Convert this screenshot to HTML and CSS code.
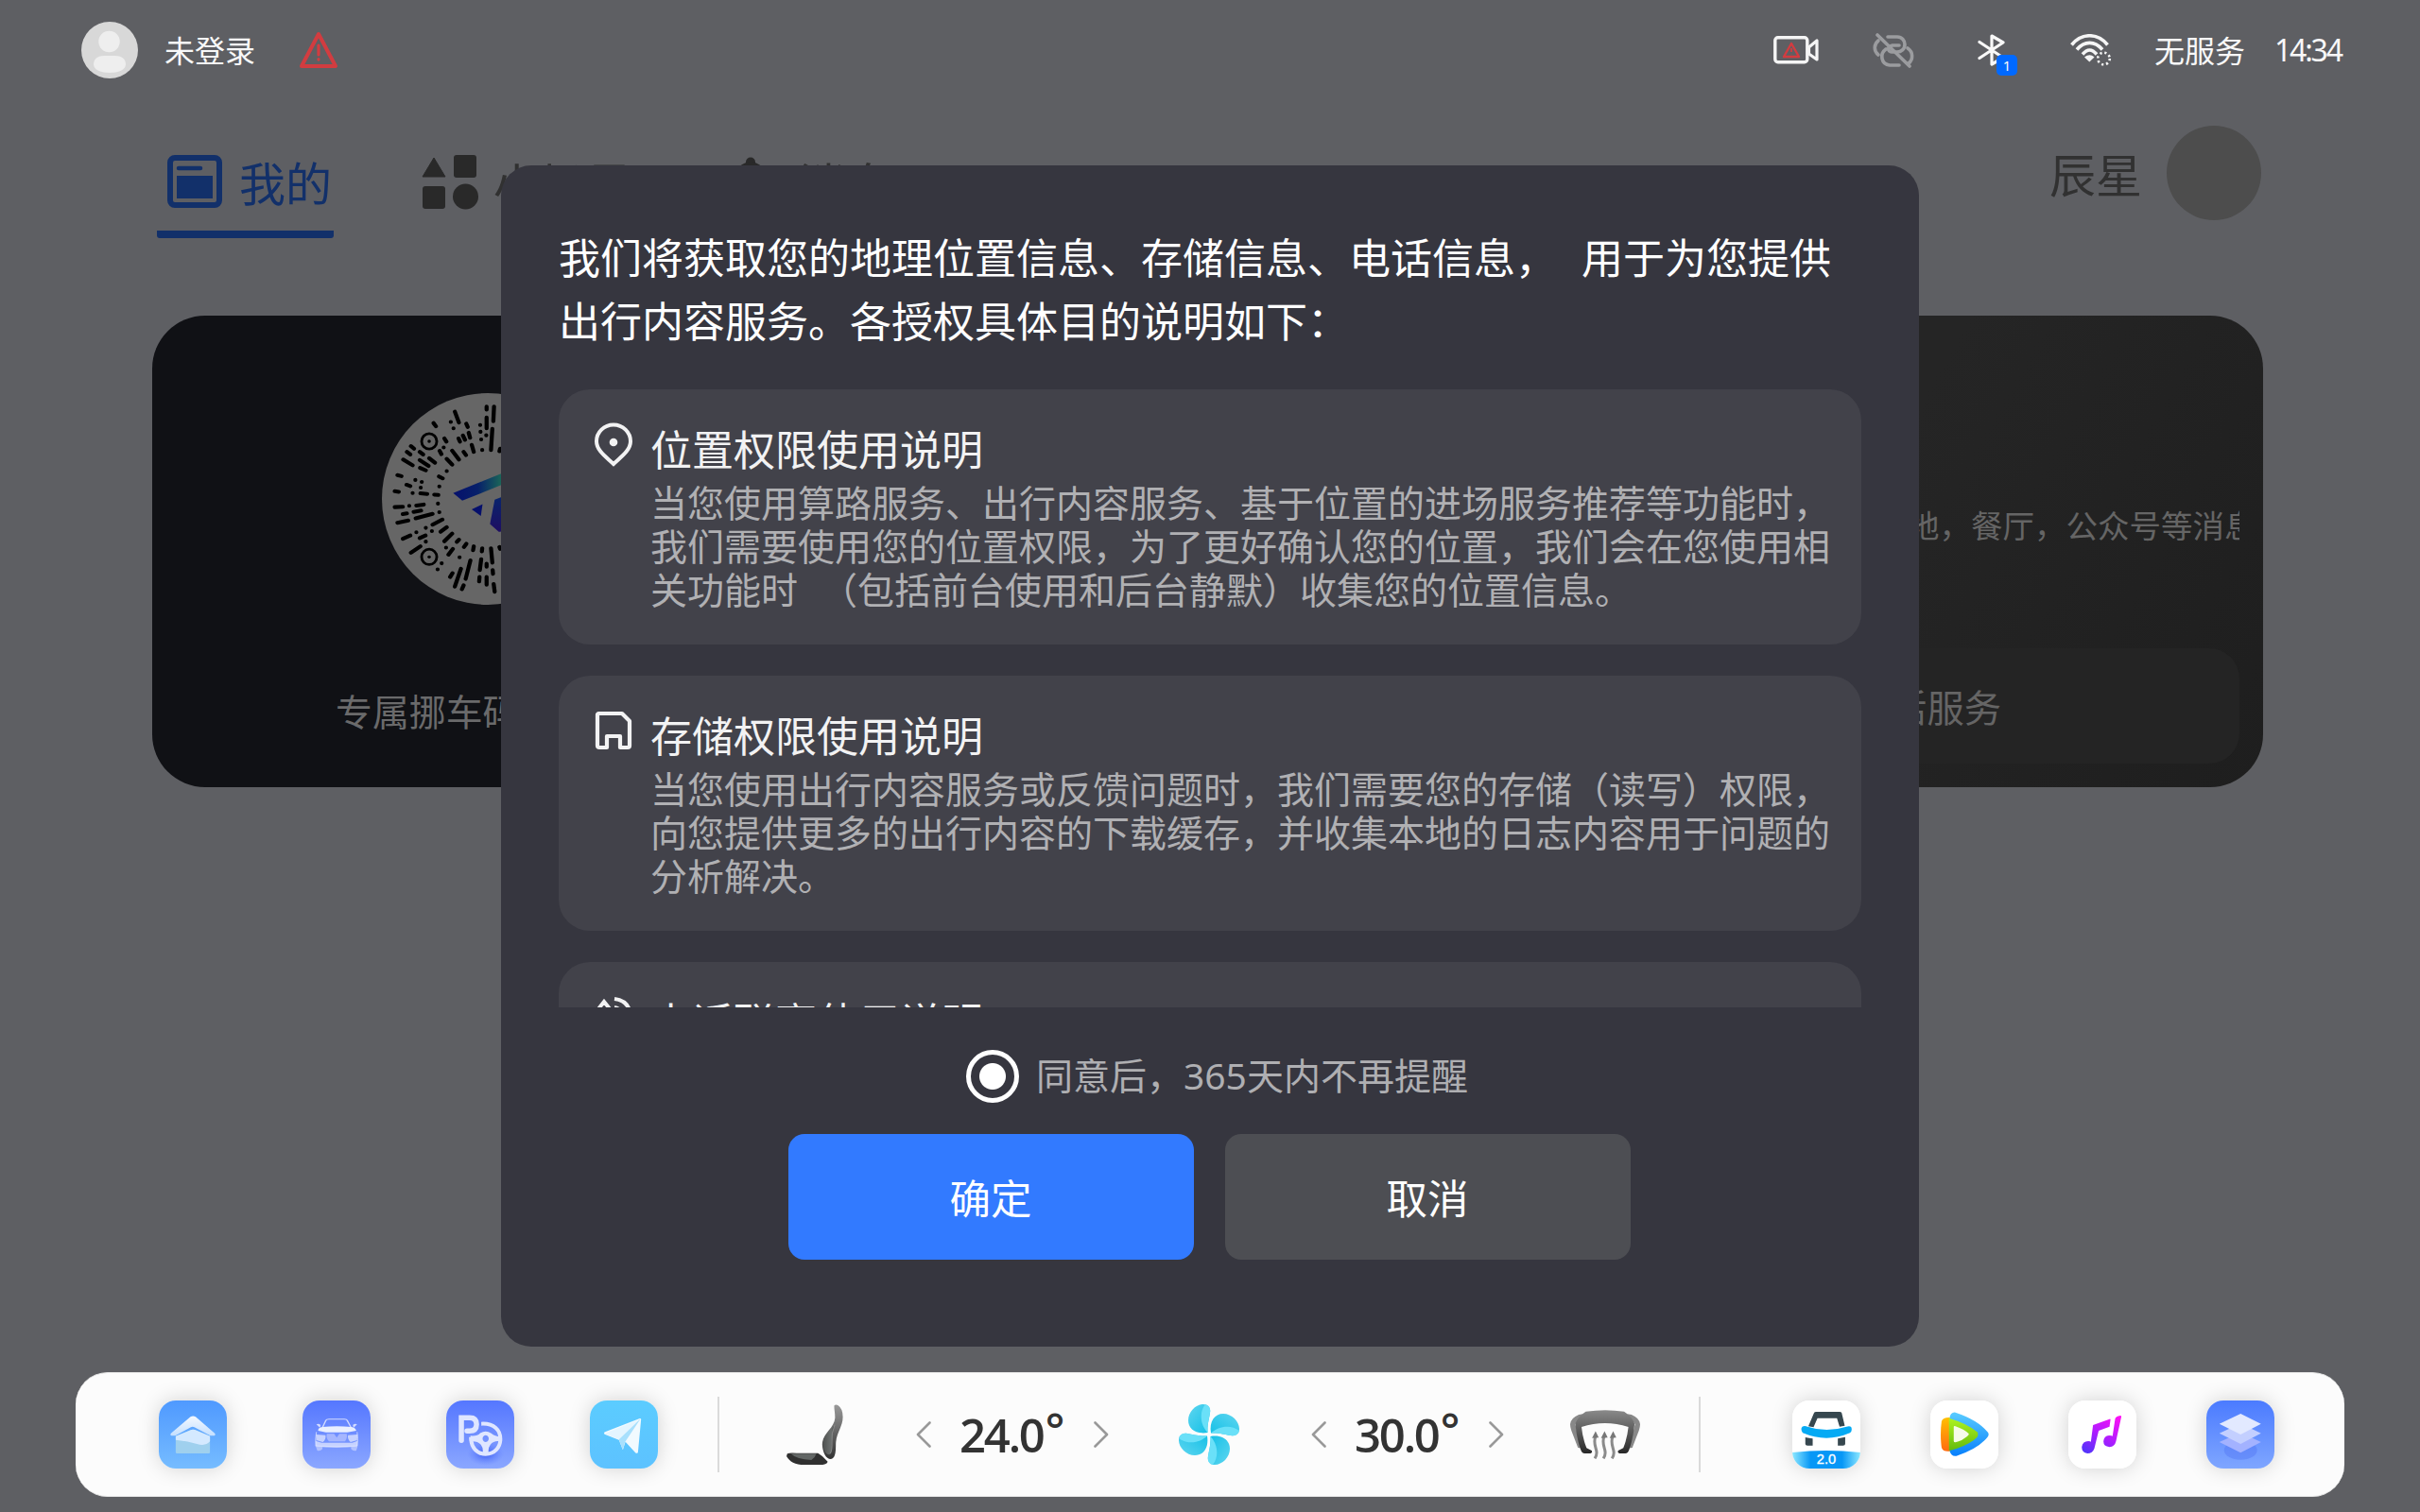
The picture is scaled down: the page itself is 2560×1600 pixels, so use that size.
FILE: index.html
```html
<!DOCTYPE html>
<html lang="zh-CN">
<head>
<meta charset="utf-8">
<title>出行服务授权</title>
<link rel="stylesheet" href="styles.css">
</head>
<body>
<div class="screen">
  <header class="status">
    <svg class="avatar" viewBox="0 0 60 60"><circle cx="30" cy="30" r="30" fill="#d8d8d8"/><circle cx="29.500" cy="21" r="11.200" fill="#eee"/><path d="M13 45c0-6 5-9 11-9h12c6 0 11 3 11 9s-8 9-17 9-17-3-17-9z" fill="#eee"/></svg>
    <span class="login">未登录</span>
    <svg class="warn" viewBox="0 0 42 40"><path d="M21 3 39 37H3z" fill="none" stroke="#d23c40" stroke-width="4" stroke-linejoin="round"/><path d="M21 15v10M21 29.500v.6" stroke="#d23c40" stroke-width="3.200" stroke-linecap="round"/></svg>
    <div class="tray">
      <svg class="ic-cam" viewBox="0 0 48 30"><rect x="1.800" y="1.800" width="34" height="26" rx="3" fill="none" stroke="#f5f5f5" stroke-width="3.400"/><path d="M37.500 12 46 5v20l-8.500-6z" fill="none" stroke="#f5f5f5" stroke-width="3.200" stroke-linejoin="round"/><path d="M19 8l8 14H11z" fill="none" stroke="#d23c40" stroke-width="2.400" stroke-linejoin="round"/><path d="M19 13v4M19 19.200v.4" stroke="#d23c40" stroke-width="1.800"/></svg>
      <svg class="ic-link" viewBox="0 0 44 38" fill="none" stroke="#9b9c9f" stroke-width="3.600" stroke-linecap="round"><path d="M16 5h10c5 0 8 4 8 8 0 5-4 8-8 8h-5M6 9C1 13 1 20 6 24M37 17c6 4 6 12 1 16M28 35H18c-9-1-11-12-4-17M28 14h-7c-6 1-5 7-1 7"/><path d="M5 3 39 36"/></svg>
      <span class="bt"><svg class="ic-bt" viewBox="0 0 30 34"><path d="M2 8.500 27 25 15 32V2l12 7L2 25.500" fill="none" stroke="#f8f8f8" stroke-width="3.200" stroke-linejoin="round" stroke-linecap="round"/></svg><span class="badge">1</span></span>
      <svg class="ic-wifi" viewBox="0 0 44 34" fill="none" stroke="#f5f5f5" stroke-width="3.600"><path d="M1.500 11.500C12-1.500 29-1.500 39.500 11.500M7 16.500c8-9.500 19-9.500 27 0M13 21.500c5-6 10-6 15 0"/><path d="M15 24.500c4-3 7-3 10.500 0l-5.200 5z" fill="#f5f5f5" stroke="none"/><circle cx="35.500" cy="26" r="6.300" stroke-width="2.600" stroke-dasharray="2.200 2.750"/></svg>
      <span class="net">无服务</span>
      <span class="clock">14:34</span>
    </div>
  </header>

  <nav class="tabs">
    <div class="tab active">
      <svg class="ic-mine" viewBox="0 0 58 56"><rect x="3" y="3" width="52" height="50" rx="5" fill="none" stroke="#12306a" stroke-width="6"/><path d="M12 14h23" stroke="#12306a" stroke-width="4.500" stroke-linecap="round"/><path d="M10 22h38v24H10z" fill="#12306a"/></svg>
      <span>我的</span>
    </div>
    <div class="tab second">
      <svg class="ic-grid" viewBox="0 0 60 58" fill="#292929"><path d="M13 3 25 23H1z" stroke="#292929" stroke-linejoin="round"/><rect x="34" y="0" width="24" height="24" rx="3"/><rect x="1" y="33" width="24" height="24" rx="3"/><circle cx="46.500" cy="44" r="13.500"/></svg>
      <span>小场景</span>
    </div>
    <div class="tab third">
      <svg class="ic-bell" viewBox="0 0 48 54" fill="#292929"><circle cx="24" cy="5.500" r="5"/><path d="M24 5c14 2 18 12 18 22v13l5 5H1l5-5V27C6 17 10 7 24 5z"/></svg>
      <span>消息</span>
    </div>
    <div class="user"><span>辰星</span><i class="face"></i></div>
  </nav>

  <main class="cards">
    <section class="card dark">
      <svg class="qr" viewBox="738 284 627 663" preserveAspectRatio="none">
        <defs><linearGradient id="lg" x1="950" y1="0" x2="1110" y2="0" gradientUnits="userSpaceOnUse"><stop offset="0" stop-color="#06106c"/><stop offset=".45" stop-color="#07206a"/><stop offset=".9" stop-color="#1b6858"/></linearGradient><linearGradient id="lg2" x1="0" y1="0" x2="0" y2="1"><stop offset="0" stop-color="#07266e"/><stop offset="1" stop-color="#1e0e62"/></linearGradient></defs>
        <ellipse cx="1051.500" cy="615.500" rx="313.500" ry="331.500" fill="#666"/>
        <path class="ticks" d="M1048 326v10M1070 326l-2 46M1048 360v34M1065 396l-4 66M954 342l12 34M942 374v.1M950 394v.1M988 380l4 10M1029 384v.1M1030 405v.1M1047 416v.1M1032 429v.1M1035 462v.1M891 378l7 10M923 426l6 10M965 426l4 10M978 417l6 13M995 408l4 16M1004 446l6 22M980 468l7 10M946 464l20 28M909 465l5 10M921 454v.1M824 450l9 8M812 468l10 8M850 468l10 8M801 492l28 18M850 494l26 18M878 488l17 14M851 518l17 8M930 490l16 18M930 528v.1M784 541l12 3M811 571l11 4M837 556v.1M856 562v.1M853 580v.1M829 597v.1M907 545l11 6M908 576v.1M776 591l12 2M852 598l20 2M893 602l12 1M776 641l24-1M819 637v.1M840 636l22-3M904 630v.1M800 663l12-2M832 656l22-4M838 676l50-14M908 657v.1M784 690l32-7M888 696l29-16M800 740l22-10M840 720v.1M868 706v.1M886 716v.1M850 738l17-8M868 749v.1M912 718l18-14M824 784l28-20M923 748l23-24M960 750l6-7M928 768v.1M935 790l13-18M981 766l7-10M1008 776l2-12M1034 780l1-10M1061 770l4 45M1086 766l2 6M968 798v.1M915 817v.1M903 836v.1M986 866l14-58M954 890l18-56M940 860l7-12M975 898l5-12M1028 838l4-34M1048 818v10M1027 860l-1 14M1048 860v24M1066 838l1 12M1069 882l3 24M1086 466l2-8"/>
        <g fill="none" stroke="#000" stroke-width="8"><ellipse cx="878" cy="435" rx="22.500" ry="24"/><ellipse cx="878" cy="797" rx="22.500" ry="24"/></g><circle cx="878" cy="435" r="5"/><circle cx="878" cy="797" r="5"/>
        <path d="M949 597 1110 528V564L976 621z" fill="url(#lg)"/><path d="M1004 648 1036 632 1031 669z" fill="#06106c"/><path d="M1072 618 1110 602 1090 718H1084L1058 694z" fill="url(#lg2)"/>
      </svg>
      <p class="qr-label">专属挪车码</p>
    </section>
    <section class="card life">
      <p class="life-text">地，餐厅，公众号等消息</p>
      <div class="life-btn">活服务</div>
    </section>
  </main>

  <footer class="dock">
    <div class="apps left">
      <svg class="app s1" viewBox="235 156 157 216" preserveAspectRatio="none"><defs><linearGradient id="h1" x1="0" y1="0" x2="0" y2="1"><stop offset="0" stop-color="#4f99ff"/><stop offset="1" stop-color="#76bcff"/></linearGradient><linearGradient id="w1" x1="0" y1="0" x2="0" y2="1"><stop offset="0" stop-color="#f4f9ff"/><stop offset="1" stop-color="#c4dfff"/></linearGradient></defs><path fill="url(#h1)" d="M235 156h157v216H235z"/><path d="M308 208q6-5 12 0l44 52q4 7-4 8h-6l-37-27q-4-3-8 0l-36 27h-8q-5-2-2-8z" fill="url(#w1)"/><path d="M274 269l36-20q4-2 8 0l35 20v52q0 3-3 3H277q-3 0-3-3z" fill="#9fd0ee"/><path d="M274 269l36-20q4-2 8 0l35 20v17q-10 16-30 8-26-10-49-13z" fill="#d4e9ff"/></svg>
      <svg class="app s2" viewBox="566 156 157 216" preserveAspectRatio="none"><defs><linearGradient id="h2" x1="0" y1="0" x2="0" y2="1"><stop offset="0" stop-color="#5577ff"/><stop offset="1" stop-color="#8ba7ff"/></linearGradient></defs><path fill="url(#h2)" d="M566 156h157v216H566z"/><path d="M612 242 620 219q1-4 7-4h36q5 0 6 4l9 23" fill="none" stroke="#d3dcff" stroke-width="3"/><path d="M598 232q5-4 10 2l-2 8zM692 232q-5-4-10 2l2 8z" fill="#d3dcff"/><path d="M602 252q0-10 10-12 33-5 67 0 9 2 11 12l-21 5H620z" fill="#eaf0ff"/><path d="M597 264l22 2q2 12-6 22l-15-6zM693 264l-22 2q-2 12 6 22l15-6z" fill="#c6d2ff"/><path d="M622 262h17l6 12 6-12h17q2 14-4 24H627q-7-10-5-24z" fill="#a5b6ff"/><path d="M596 284l14 6h71l12-6v18q-48 6-97 0z" fill="#c6d2ff"/><path d="M597 303h15v7q-5 8-12 5zM693 303h-15v7q5 8 12 5z" fill="#b1c1ff"/><path d="M598 256q-3 24-1 44 48 5 95 0 3-24 0-44" fill="none" stroke="#dbe3ff" stroke-width="2"/></svg>
      <svg class="app s3" viewBox="897 156 157 216" preserveAspectRatio="none"><defs><radialGradient id="sh3"><stop offset="0" stop-color="#3c5cf0"/><stop offset="1" stop-color="#5f7fff" stop-opacity="0"/></radialGradient></defs><path fill="url(#h2)" d="M897 156h157v216H897z"/><ellipse cx="988" cy="325" rx="42" ry="38" fill="url(#sh3)"/><g fill="none" stroke="#dfe6ff"><path class="px6" stroke-linecap="round" d="M932 283V211H951Q967 211 967 232 967 253 951 253H945"/><path class="px4" d="M978 230C1008 228 1022 250 1022 278 1022 306 1008 326 988 326 968 326 954 306 954 272"/></g><path d="M953 268q16 2 22-8 13-12 26 0 8 10 22 10v16q-16-4-24 10-6 10-4 28h-14q2-18-4-28-8-12-24-10zM988 266a7 11 0 1 0 .1 0z" fill="#dfe6ff" fill-rule="evenodd"/></svg>
      <svg class="app s4" viewBox="1228 156 157 216" preserveAspectRatio="none"><defs><linearGradient id="h4" x1="0" y1="0" x2="0" y2="1"><stop offset="0" stop-color="#5bccff"/><stop offset="1" stop-color="#5dc2ff"/></linearGradient></defs><path fill="url(#h4)" d="M1228 156h157v216h-157z"/><path d="M1263 256 1343 213q4-1 3 5l-7 102q-2 6-6 2l-23-35-6 26-9-32-33-18q-3-4 1-7z" fill="#f1faff"/><path d="M1345 215 1295 280l-33-19z" fill="#e4f5ff"/><path d="M1345 214 1309 288l-5 25-9-33z" fill="#a8e0fd"/></svg>
    </div>
    <i class="divider d1"></i>
    <svg class="seat" viewBox="225 167 146 190" preserveAspectRatio="none"><defs><linearGradient id="st" x1="0" y1="0" x2="0" y2="1"><stop offset="0" stop-color="#999"/><stop offset="1" stop-color="#333"/></linearGradient><linearGradient id="st2" x1="0" y1="0" x2="1" y2="0"><stop offset="0" stop-color="#505352"/><stop offset=".7" stop-color="#6c706f"/><stop offset="1" stop-color="#444"/></linearGradient></defs><path d="M348 171q4-5 10 0 12 10 12 36c0 30-17 50-18 84 0 30-2 46-13 48-12 0-21-20-22-46 0-35 31-50 33-84 0-18-3-28-2-38z" fill="url(#st)"/><path d="M349 232q-8 24-8 50c0 22 2 38-6 43-12-2-17-20-15-42 2-20 18-34 29-51z" fill="url(#st2)"/><path d="M349 232q-9 26-7 54 1 24-4 36" fill="none" stroke="#aaa" stroke-width="1.500"/><path d="M227 322q8-3 24-1h55q12 8 25 26-1 10-22 10h-38c-24 0-38-10-46-27z" fill="#303030"/><path d="M236 322h66q-3 12-13 20-38-2-53-20z" fill="#626665"/></svg>
    <svg class="chev c1" viewBox="0 0 16 28"><path d="M14.500 1.500 2 14l12.500 12.500"/></svg>
    <span class="temp">24.0<sup>°</sup></span>
    <svg class="chev c2" viewBox="0 0 16 28"><path d="M1.500 1.500 14 14 1.500 26.500"/></svg>
    <svg class="fan" viewBox="0 0 64 64"><defs><linearGradient id="fn" x1="0" y1="0" x2="1" y2="1"><stop offset="0" stop-color="#5fd6f0"/><stop offset="1" stop-color="#12bfe6"/></linearGradient><g id="blade"><path d="M30.500 30C18 32 10 26 10 17 10 8 18 0 26 0c5 0 8 4 7 9-1 7-3 12-2.500 21z" fill="url(#fn)"/><path d="M30.500 30C23 22 21 9 28 0c4 1 6 4 5 9-1 7-3 12-2.500 21z" fill="#6ae0f8"/></g></defs><use href="#blade"/><use href="#blade" transform="rotate(90 32 32)"/><use href="#blade" transform="rotate(180 32 32)"/><use href="#blade" transform="rotate(270 32 32)"/></svg>
    <svg class="chev c3" viewBox="0 0 16 28"><path d="M14.500 1.500 2 14l12.500 12.500"/></svg>
    <span class="temp">30.0<sup>°</sup></span>
    <svg class="chev c4" viewBox="0 0 16 28"><path d="M1.500 1.500 14 14 1.500 26.500"/></svg>
    <svg class="defrost" viewBox="738 185 179 155" preserveAspectRatio="none"><defs><linearGradient id="df" x1="0" y1="0" x2="0" y2="1"><stop offset="0" stop-color="#8a8a8a"/><stop offset="1" stop-color="#282828"/></linearGradient></defs><path d="M760 200q-20 10-22 30 0 9 3 20l17 54 8 2-15-76 20-32zM895 200q20 10 22 30 0 9-3 20l-17 54-8 2 15-76-20-32z" fill="#888"/><path d="M778 190q50-9 98 0 20 16 27 38-4 50-14 82-3 12-10 12h-15q-6-2-3-9l13-8q10-30 13-66-60-24-120 0 3 36 13 66l13 8q3 7-3 9h-15q-7 0-10-12-10-32-14-82 7-22 27-38z" fill="url(#df)"/><g class="heat"><path d="M801 338c14-26-8-38 2-70M823 338c14-26-8-38 2-70M845 338c14-26-8-38 2-70"/></g><path d="M794 274l9-22 8 20zM817 274l9-22 8 20zM839 274l9-22 8 20z" fill="#777"/></svg>
    <i class="divider d2"></i>
    <div class="apps right">
      <svg class="app w" viewBox="122 156 157 216" preserveAspectRatio="none"><defs><linearGradient id="c1"><stop offset="0" stop-color="#8de8ff"/><stop offset=".27" stop-color="#0797f6"/><stop offset=".73" stop-color="#0797f6"/><stop offset="1" stop-color="#8de8ff"/></linearGradient></defs><path fill="#fff" d="M122 156h157v216H122z"/><path d="M159 238 172 196q1-4 5-4h54q4 0 5 4l7 40-12 3-6-27h-45l-9 29zM152 273q9 2 17 4v22h-12q-5 0-5-5zM244 272l-17 5v22h12q5 0 5-5z" fill="#36474f"/><path d="M145 239q5-4 12 0 44 20 90 0 8-4 11 2 3 12-3 18-54 32-109 0-6-12-1-20z" fill="#05aaf4"/><path d="M122 321q78-12 157 0v51H122z" fill="url(#c1)"/><g transform="translate(200.500 357) scale(.726 1)"><text class="ver" text-anchor="middle">2.0</text></g></svg>
      <svg class="app w" viewBox="440 156 157 216" preserveAspectRatio="none"><defs><linearGradient id="v1" x1="0" y1="0" x2="0" y2="1"><stop offset="0" stop-color="#5accff"/><stop offset="1" stop-color="#077ffc"/></linearGradient><linearGradient id="v2" x1="0" y1="0" x2="0" y2="1"><stop offset="0" stop-color="#ffc000"/><stop offset="1" stop-color="#ff6a10"/></linearGradient><linearGradient id="v3" x1="0" y1="0" x2="0" y2="1"><stop offset="0" stop-color="#aef322"/><stop offset="1" stop-color="#64ba0d"/></linearGradient></defs><path fill="#fff" d="M440 156h157v216H440z"/><path d="M484 214q2-22 14-20 52 24 74 62 5 8 0 16-22 38-72 60-12 3-16-18z" fill="url(#v1)"/><path d="M485 210q-16-1-19 12-4 42 0 84 4 14 19 11z" fill="url(#v2)"/><path d="M483 212q44 18 65 44 4 8 0 16-20 28-65 44z" fill="url(#v3)"/><path d="M494 240q0-4 4-2 20 9 31 24 0 4-4 8-12 14-27 19-4 0-4-4z" fill="#f6fbe9"/></svg>
      <svg class="app w" viewBox="758 156 157 216" preserveAspectRatio="none"><defs><linearGradient id="m1" x1="790" y1="320" x2="880" y2="210" gradientUnits="userSpaceOnUse"><stop offset="0" stop-color="#4c35fa"/><stop offset=".5" stop-color="#b01cff"/><stop offset="1" stop-color="#ff10f4"/></linearGradient></defs><path fill="#fff" d="M758 156h157v216H758z"/><path fill="url(#m1)" d="M815 234l38-19q3-1 2 4l-2 20-25 13-10 56q-4 16-16 16-13-2-13-20 2-19 15-19 5 0 6 2zM866 214q1-7 12-10 3 0 2 5l-12 76q-3 18-15 19-14-2-14-18 1-18 13-19 7 0 8 2z"/></svg>
      <svg class="app w" viewBox="1076 156 157 216" preserveAspectRatio="none"><defs><linearGradient id="l1" x1="0" y1="0" x2="0" y2="1"><stop offset="0" stop-color="#4b7bff"/><stop offset="1" stop-color="#7fa6ff"/></linearGradient></defs><path fill="url(#l1)" d="M1076 156h157v216h-157z"/><ellipse cx="1155" cy="314" rx="38" ry="30" fill="#4a6cf2" opacity=".35"/><path d="M1106 288l49-31 47 31-47 34z" fill="#a3b2ff"/><path d="M1106 260l49-31 47 31-47 34z" fill="#c3cfff"/><path d="M1106 230l49-32 47 32-47 34z" fill="#e2e9ff"/></svg>
    </div>
  </footer>

  <div class="dialog" role="dialog">
    <div class="intro"><p>我们将获取您的地理位置信息、存储信息、电话信息，<span class="gap">用于为您提供</span></p><p>出行内容服务。各授权具体目的说明如下：</p></div>
    <div class="list">
      <article class="perm">
        <svg class="ic-pin" viewBox="0 0 42 48"><path d="M21 44C14 37 3 30 3 20a18 17.500 0 0 1 36 0c0 10-11 17-18 24z" fill="none" stroke="#f2f2f3" stroke-width="4"/><circle cx="21" cy="21" r="4.300" fill="#f2f2f3"/></svg>
        <div class="perm-text"><h2>位置权限使用说明</h2><p>当您使用算路服务、出行内容服务、基于位置的进场服务推荐等功能时，</p><p>我们需要使用您的位置权限，为了更好确认您的位置，我们会在您使用相</p><p>关功能时<span class="gap2">（包括前台使用和后台静默）收集您的位置信息。</span></p></div>
      </article>
      <article class="perm">
        <svg class="ic-pin" viewBox="0 0 42 48"><path d="M5 5h25l8 8v26q0 2-2 2h-8V29H14v12H6q-2 0-2-2V6z" fill="none" stroke="#f2f2f3" stroke-width="4.200" stroke-linejoin="round"/></svg>
        <div class="perm-text"><h2>存储权限使用说明</h2><p>当您使用出行内容服务或反馈问题时，我们需要您的存储（读写）权限，</p><p>向您提供更多的出行内容的下载缓存，并收集本地的日志内容用于问题的</p><p>分析解决。</p></div>
      </article>
      <article class="perm">
        <svg class="ic-pin" viewBox="0 0 42 48" fill="none" stroke="#f2f2f3" stroke-width="4"><path d="M4 16 11 7l8 10-4 8q5 9 13 12l7-4 7 8q-8 8-16 4Q8 35 4 16zM22 4q16 2 17 18M22 13q7 1 8 9"/></svg>
        <div class="perm-text"><h2>电话联离使用说明</h2></div>
      </article>
    </div>
    <div class="agree"><i class="radio"></i><span>同意后，365天内不再提醒</span></div>
    <div class="actions"><button class="btn ok">确定</button><button class="btn">取消</button></div>
  </div>
</div>
</body>
</html>
```
FILE: styles.css
```css
* { box-sizing: border-box; margin: 0; padding: 0; }
body { font-family: "Noto Sans CJK SC", sans-serif; background: #5e5f63; }
svg { display: block; flex: none; }
.screen { position: relative; width: 2560px; height: 1600px; overflow: hidden; display: flex; flex-direction: column; background: #5e5f63; }

.status { height: 106px; flex: none; display: flex; align-items: center; padding: 0 82px 0 86px; color: #f8f8f8; font-size: 32px; line-height: 48px; }
.avatar { width: 60px; height: 60px; }
.login { margin-left: 28px; padding-bottom: 3px; }
.warn { width: 42px; height: 40px; margin-left: 46px; }
.tray { margin-left: auto; display: flex; align-items: center; }
.ic-cam { width: 48px; height: 30px; }
.ic-link { width: 44px; height: 38px; margin-left: 57px; }
.bt { position: relative; margin-left: 67px; }
.ic-bt { width: 30px; height: 34px; }
.badge { position: absolute; left: 20px; top: 22px; width: 22px; height: 22px; border-radius: 5px; background: #0069ff; font-family: "Noto Sans", sans-serif; font-size: 15px; line-height: 22px; text-align: center; }
.ic-wifi { width: 44px; height: 34px; margin-left: 68px; }
.net { margin-left: 45px; padding-bottom: 3px; }
.clock { margin-left: 31px; width: 72px; font-family: "Noto Sans", sans-serif; letter-spacing: -2.200px; white-space: nowrap; }

.tabs { height: 228px; flex: none; display: flex; align-items: flex-start; padding: 54px 168px 0 166px; font-size: 49px; line-height: 70px; color: #313131; }
.tab { display: flex; align-items: center; white-space: nowrap; }
.tab.active { width: 187px; height: 92px; padding: 0 0 20px 11px; border-bottom: 8px solid #12306a; color: #12306a; border-radius: 3px; }
.tab.active span { margin-left: 18px; }
.ic-mine { width: 58px; height: 56px; }
.tab.second { margin-left: 93px; height: 66px; }
.ic-grid { width: 60px; height: 58px; }
.tab.second span { margin-left: 16px; }
.tab.third { margin-left: 101px; height: 66px; }
.ic-bell { width: 48px; height: 54px; }
.tab.third span { margin-left: 27px; }
.user { margin-left: auto; display: flex; align-items: center; margin-top: -27px; height: 100px; }
.face { width: 100px; height: 100px; border-radius: 50%; background: #4d4d4d; margin-left: 26px; }

.cards { height: 499px; flex: none; display: flex; justify-content: space-between; padding: 0 166px 0 161px; }
.card { width: 708px; height: 499px; border-radius: 56px; }
.card.dark { background: #101115; padding: 82px 0 0 194px; }
.qr { width: 224px; height: 224px; margin-left: 49px; }
.ticks { fill: none; stroke: #000; stroke-width: 12; stroke-linecap: round; }
.qr-label { margin-top: 82px; font-size: 38.900px; line-height: 58px; color: #6a6a6b; }
.card.life { background: linear-gradient(120deg, #252525 40%, #1e1e1e); padding: 195px 25px 25px; display: flex; flex-direction: column; }
.life-text { align-self: flex-end; width: 351px; overflow: hidden; white-space: nowrap; font-size: 33.500px; line-height: 52px; color: #656565; }
.life-btn { margin-top: auto; height: 122px; border-radius: 32px; background: #242424; color: #656565; font-size: 39.300px; line-height: 121px; text-align: right; padding-right: 252px; }

.dock { flex: none; margin: 619px 80px 0; height: 132px; border-radius: 34px; background: #fcfcfc; border: solid #e6e6e6; border-width: 1px 0; display: flex; align-items: center; padding: 0 74px 0 88px; }
.apps { display: flex; }
.apps.left { gap: 80px; }
.apps.right { gap: 74px; margin-left: 97px; }
.app { width: 72px; height: 72px; border-radius: 18px; box-shadow: 0 0 22px rgba(0, 0, 0, .17); }
.divider { width: 2px; height: 80px; background: #dadada; flex: none; }
.d1 { margin-left: 63px; }
.d2 { margin-left: 62px; }
.seat { width: 60px; height: 64px; margin-left: 71px; }
.chev { width: 16px; height: 28px; fill: none; stroke: #999; stroke-width: 2.600; stroke-linecap: round; stroke-linejoin: round; }
.c1 { margin-left: 77px; }
.c2, .c4 { margin-left: 14px; }
.c3 { margin-left: 76px; }
.fan { width: 64px; height: 64px; margin-left: 74px; }
.temp { margin-left: 30px; width: 128px; font: 600 49px/60px "Open Sans", sans-serif; letter-spacing: -2.200px; color: #333; white-space: nowrap; }
.temp sup { font-size: 48px; line-height: 0; vertical-align: 6px; margin-left: 2px; }
.defrost { width: 74px; height: 52px; margin-left: 70px; }
.px6 { stroke-width: 5.500px; vector-effect: non-scaling-stroke; }
.px4 { stroke-width: 4px; vector-effect: non-scaling-stroke; }
.heat path { fill: none; stroke: #8b8b8b; stroke-width: 3px; vector-effect: non-scaling-stroke; }
.ver { font: 500 44px "Liberation Sans", sans-serif; fill: #fff; stroke: #fff; stroke-width: 1px; }

.dialog { position: absolute; left: 530px; top: 175px; width: 1500px; height: 1250px; border-radius: 32px; background: #36363f; padding: 63px 61px 0; display: flex; flex-direction: column; }
.intro { font-size: 44px; line-height: 67px; color: #fff; height: 174px; flex: none; white-space: nowrap; }
.gap { margin-left: 26px; }
.gap2 { margin-left: 24px; }
.list { height: 654px; flex: none; overflow: hidden; display: flex; flex-direction: column; gap: 33px; }
.perm { height: 270px; flex: none; border-radius: 33px; background: #42424a; display: flex; padding: 30px 0 0 37px; }
.ic-pin { width: 42px; height: 48px; margin-top: 5px; }
.perm-text { margin-left: 18px; white-space: nowrap; }
.perm-text h2 { font-size: 44px; line-height: 64px; font-weight: 400; color: #f2f2f3; }
.perm-text p { font-size: 39px; line-height: 46px; color: #b0b0b3; }
.perm-text h2 + p { margin-top: 1px; }
.agree { height: 56px; flex: none; margin-top: 45px; display: flex; align-items: center; padding-left: 431px; font: 39px/56px "Noto Sans", "Noto Sans CJK SC", sans-serif; color: #afafb2; }
.radio { width: 56px; height: 56px; border: 5px solid #fff; border-radius: 50%; background: radial-gradient(circle, #fff 13.500px, transparent 14.500px); }
.agree span { margin-left: 18px; padding-bottom: 2px; }
.actions { margin-top: 33px; padding-right: 2px; display: flex; gap: 33px; justify-content: center; }
.btn { width: 429px; height: 133px; border: 0; border-radius: 17px; background: #4d4e53; color: #fff; font-family: inherit; font-size: 43.500px; }
.btn.ok { background: #327aff; }
```
